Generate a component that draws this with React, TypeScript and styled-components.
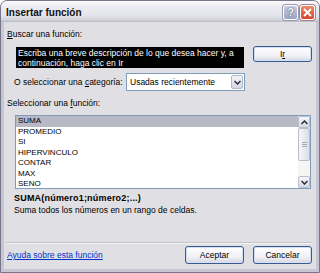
import styled, { createGlobalStyle } from "styled-components";

const GlobalStyle = createGlobalStyle`
  html, body {
    margin: 0;
    padding: 0;
    background: #ffffff;
  }
  body {
    font-family: "Liberation Sans", Arial, sans-serif;
    font-size: 8.5px;
    color: #000;
  }
`;

const functions = ["SUMA", "PROMEDIO", "SI", "HIPERVINCULO", "CONTAR", "MAX", "SENO"];

function Chevron({ up }: { up?: boolean }) {
  return (
    <svg width="7" height="5" viewBox="0 0 7 5">
      <path
        d={up ? "M0.5 4 L3.5 1 L6.5 4" : "M0.5 1 L3.5 4 L6.5 1"}
        fill="none"
        stroke="#2b2b3c"
        strokeWidth="1.5"
      />
    </svg>
  );
}

export default function App() {
  return (
    <>
      <GlobalStyle />
      <Window>
        <TitleBar>
          <Title>Insertar función</Title>
          <Controls>
            <HelpButton>?</HelpButton>
            <CloseButton>
              <svg width="9" height="9" viewBox="0 0 9 9">
                <path d="M1 1 L8 8 M8 1 L1 8" stroke="#fff" strokeWidth="1.8" />
              </svg>
            </CloseButton>
          </Controls>
        </TitleBar>

        <Content>
          <Label>
            <u>B</u>uscar una función:
          </Label>

          <SearchRow>
            <SearchBox>
              Escriba una breve descripción de lo que desea hacer y, a
              <br />
              continuación, haga clic en Ir
            </SearchBox>
            <PushButton>
              I<u>r</u>
            </PushButton>
          </SearchRow>

          <CategoryRow>
            <CategoryLabel>
              O seleccionar una <u>c</u>ategoría:
            </CategoryLabel>
            <Select>
              <SelectText>Usadas recientemente</SelectText>
              <DropButton>
                <Chevron />
              </DropButton>
            </Select>
          </CategoryRow>

          <FuncLabel>
            Seleccionar una <u>f</u>unción:
          </FuncLabel>

          <ListBox>
            <Items>
              {functions.map((f, i) => (
                <Item key={f} $selected={i === 0}>
                  {f}
                </Item>
              ))}
            </Items>
            <ScrollBar>
              <ScrollArrow>
                <Chevron up />
              </ScrollArrow>
              <Thumb>
                <Grip />
                <Grip />
                <Grip />
              </Thumb>
              <Track />
              <ScrollArrow>
                <Chevron />
              </ScrollArrow>
            </ScrollBar>
          </ListBox>

          <Syntax>SUMA(número1;número2;...)</Syntax>
          <Description>Suma todos los números en un rango de celdas.</Description>

          <Spacer />
          <Separator />

          <Footer>
            <HelpLink>Ayuda sobre esta función</HelpLink>
            <FooterButton>Aceptar</FooterButton>
            <FooterButton>Cancelar</FooterButton>
          </Footer>
        </Content>
      </Window>
    </>
  );
}

const Window = styled.div`
  width: 320px;
  height: 273px;
  box-sizing: border-box;
  display: flex;
  flex-direction: column;
  background: #c6c6d4;
  border: 1px solid #76768a;
  border-radius: 7px 7px 0 0;
  padding: 0 3px 3px;
  overflow: hidden;
`;

const TitleBar = styled.div`
  height: 21px;
  margin: 0 -3px;
  padding: 0 4px 0 5px;
  display: flex;
  align-items: center;
  justify-content: space-between;
  background: linear-gradient(#fbfbfd 0%, #ececf2 25%, #e4e4ec 70%, #d2d2dc 90%, #b8b8c6 100%);
`;

const Title = styled.div`
  font-size: 10px;
  font-weight: bold;
  color: #111;
  padding-top: 1px;
`;

const Controls = styled.div`
  display: flex;
  gap: 2px;
  padding-top: 1px;
`;

const HelpButton = styled.div`
  width: 13px;
  height: 13px;
  border: 1px solid #ffffff;
  border-radius: 3px;
  background: linear-gradient(#c8cce0, #9aa2bf);
  color: #fff;
  font-size: 11px;
  font-weight: bold;
  line-height: 13px;
  text-align: center;
  text-shadow: 0 0 1px #3c4868, 0 0 1px #3c4868;
  box-shadow: 0 0 0 1px #9a9ab0;
`;

const CloseButton = styled.div`
  width: 13px;
  height: 13px;
  border: 1px solid #ffffff;
  border-radius: 3px;
  background: linear-gradient(#ee8a6a, #d8452a);
  display: flex;
  align-items: center;
  justify-content: center;
  box-shadow: 0 0 0 1px #b0808a;
`;

const Content = styled.div`
  flex: 1;
  display: flex;
  flex-direction: column;
  background: #e0dfe3;
  padding: 7px 4px 5px 3px;
`;

const Label = styled.div`
  line-height: 10px;
  height: 10px;
  white-space: nowrap;
`;

const SearchRow = styled.div`
  margin-top: 7px;
  display: flex;
  align-items: flex-start;
  padding-left: 9px;
  gap: 9px;
`;

const SearchBox = styled.div`
  margin-top: 1px;
  width: 228px;
  height: 21px;
  box-sizing: border-box;
  padding: 1px 2px;
  background: #000;
  color: #fff;
  line-height: 10px;
  white-space: nowrap;
  overflow: hidden;
`;

const PushButton = styled.div`
  width: 59px;
  height: 16px;
  box-sizing: border-box;
  border: 1px solid #3a5a8c;
  border-radius: 3px;
  background: linear-gradient(#ffffff 0%, #f2f2f6 60%, #d6d6e2 100%);
  box-shadow: inset 0 0 0 1px #cfe0f7;
  display: flex;
  align-items: center;
  justify-content: center;
  line-height: 10px;
`;

const CategoryRow = styled.div`
  margin-top: 5px;
  height: 18px;
  display: flex;
  align-items: center;
  padding-left: 7px;
`;

const CategoryLabel = styled.div`
  width: 112px;
  white-space: nowrap;
`;

const Select = styled.div`
  width: 119px;
  height: 18px;
  box-sizing: border-box;
  border: 1px solid #7f9db9;
  background: #fff;
  display: flex;
  align-items: center;
  justify-content: space-between;
  padding: 1px;
`;

const SelectText = styled.div`
  padding-left: 2px;
  white-space: nowrap;
`;

const DropButton = styled.div`
  width: 12px;
  height: 14px;
  box-sizing: border-box;
  border: 1px solid #b4b8cc;
  border-radius: 2px;
  background: linear-gradient(#f4f4f8, #d4d6e2);
  display: flex;
  align-items: center;
  justify-content: center;
`;

const FuncLabel = styled(Label)`
  margin-top: 7px;
`;

const ListBox = styled.div`
  margin-top: 7px;
  margin-left: 8px;
  width: 296px;
  height: 74px;
  box-sizing: border-box;
  border: 1px solid #7f9db9;
  background: #fff;
  display: flex;
`;

const Items = styled.div`
  flex: 1;
  display: flex;
  flex-direction: column;
  font-size: 8px;
`;

const Item = styled.div<{ $selected?: boolean }>`
  height: 10.5px;
  line-height: 10.5px;
  padding-left: 2px;
  background: ${(p) => (p.$selected ? "#b9b9c6" : "transparent")};
`;

const ScrollBar = styled.div`
  width: 12px;
  display: flex;
  flex-direction: column;
  background: #f5f5f2;
`;

const ScrollArrow = styled.div`
  height: 12px;
  box-sizing: border-box;
  border: 1px solid #b8bccc;
  border-radius: 2px;
  background: linear-gradient(#f6f6fa, #d6d8e4);
  display: flex;
  align-items: center;
  justify-content: center;
`;

const Thumb = styled.div`
  height: 33px;
  box-sizing: border-box;
  border: 1px solid #b8bccc;
  border-radius: 2px;
  background: linear-gradient(90deg, #f6f6fa, #dcdee8);
  display: flex;
  flex-direction: column;
  align-items: center;
  justify-content: center;
  gap: 1px;
`;

const Grip = styled.div`
  width: 5px;
  height: 1px;
  background: #a4a8bc;
`;

const Track = styled.div`
  flex: 1;
`;

const Syntax = styled.div`
  margin-top: 4px;
  padding-left: 7px;
  font-size: 9px;
  font-weight: bold;
  letter-spacing: 0.2px;
  line-height: 10px;
  white-space: nowrap;
`;

const Description = styled.div`
  margin-top: 2px;
  padding-left: 7px;
  line-height: 10px;
  white-space: nowrap;
`;

const Spacer = styled.div`
  flex: 1;
`;

const Separator = styled.div`
  margin-left: -1px;
  height: 0;
  border-top: 1px solid #c4c4cc;
  border-bottom: 1px solid #f4f4f6;
`;

const Footer = styled.div`
  margin-top: 2px;
  display: flex;
  align-items: center;
  gap: 9px;
`;

const HelpLink = styled.div`
  flex: 1;
  color: #0033cc;
  text-decoration: underline;
  white-space: nowrap;
`;

const FooterButton = styled(PushButton)`
  height: 18px;
`;
